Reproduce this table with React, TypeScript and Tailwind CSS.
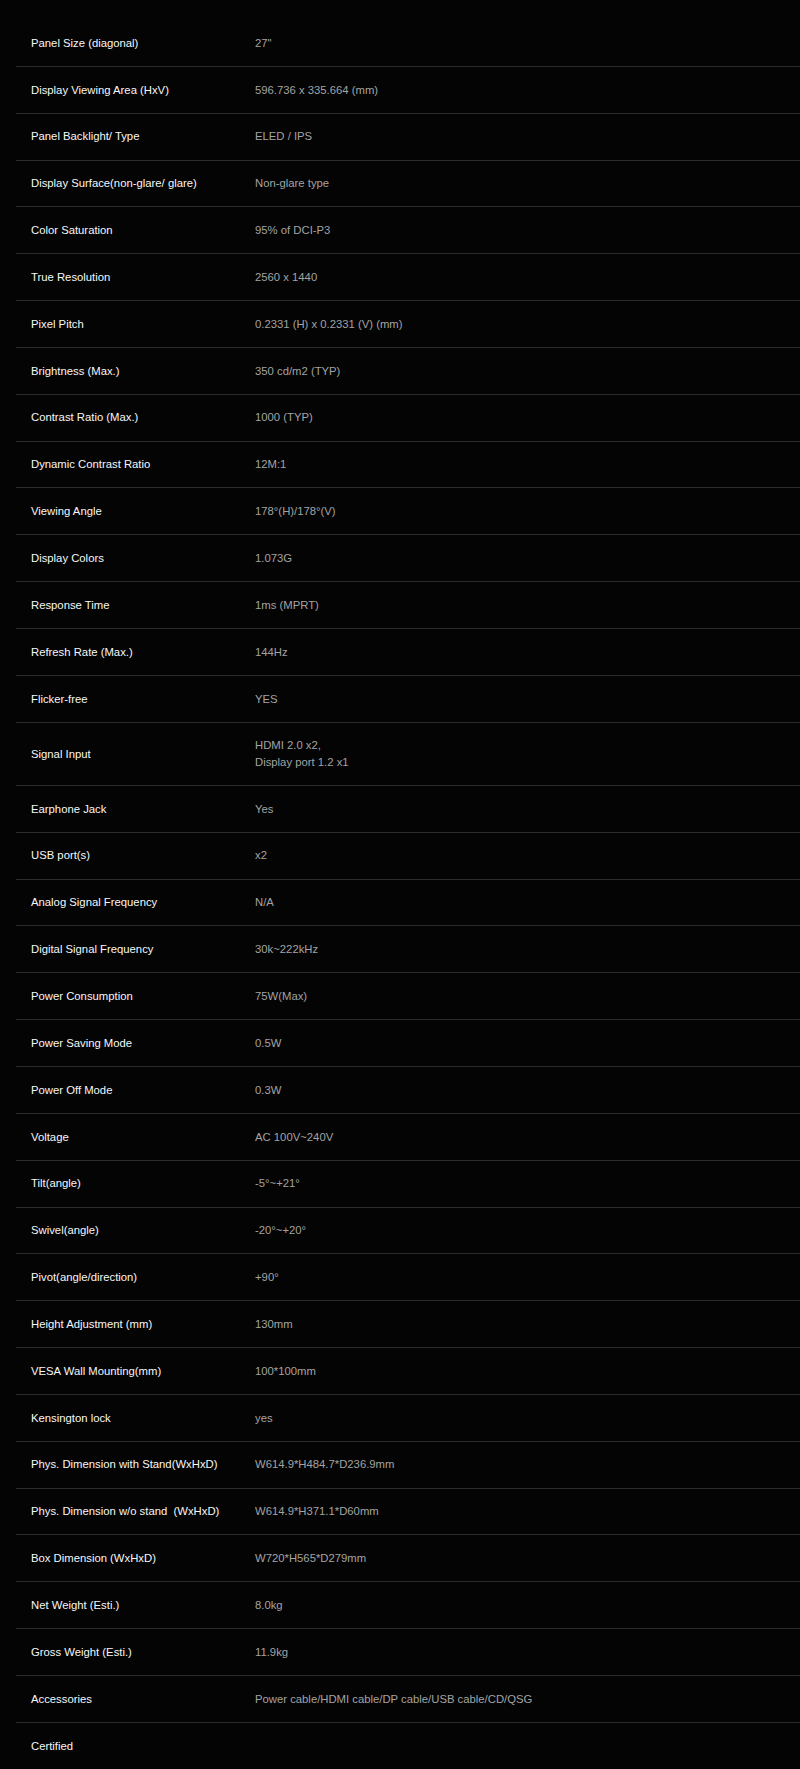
const specs: [string, string[]][] = [
  ["Panel Size (diagonal)", ["27\""]],
  ["Display Viewing Area (HxV)", ["596.736 x 335.664 (mm)"]],
  ["Panel Backlight/ Type", ["ELED / IPS"]],
  ["Display Surface(non-glare/ glare)", ["Non-glare type"]],
  ["Color Saturation", ["95% of DCI-P3"]],
  ["True Resolution", ["2560 x 1440"]],
  ["Pixel Pitch", ["0.2331 (H) x 0.2331 (V) (mm)"]],
  ["Brightness (Max.)", ["350 cd/m2 (TYP)"]],
  ["Contrast Ratio (Max.)", ["1000 (TYP)"]],
  ["Dynamic Contrast Ratio", ["12M:1"]],
  ["Viewing Angle", ["178°(H)/178°(V)"]],
  ["Display Colors", ["1.073G"]],
  ["Response Time", ["1ms (MPRT)"]],
  ["Refresh Rate (Max.)", ["144Hz"]],
  ["Flicker-free", ["YES"]],
  ["Signal Input", ["HDMI 2.0 x2,", "Display port 1.2 x1"]],
  ["Earphone Jack", ["Yes"]],
  ["USB port(s)", ["x2"]],
  ["Analog Signal Frequency", ["N/A"]],
  ["Digital Signal Frequency", ["30k~222kHz"]],
  ["Power Consumption", ["75W(Max)"]],
  ["Power Saving Mode", ["0.5W"]],
  ["Power Off Mode", ["0.3W"]],
  ["Voltage", ["AC 100V~240V"]],
  ["Tilt(angle)", ["-5°~+21°"]],
  ["Swivel(angle)", ["-20°~+20°"]],
  ["Pivot(angle/direction)", ["+90°"]],
  ["Height Adjustment (mm)", ["130mm"]],
  ["VESA Wall Mounting(mm)", ["100*100mm"]],
  ["Kensington lock", ["yes"]],
  ["Phys. Dimension with Stand(WxHxD)", ["W614.9*H484.7*D236.9mm"]],
  ["Phys. Dimension w/o stand  (WxHxD)", ["W614.9*H371.1*D60mm"]],
  ["Box Dimension (WxHxD)", ["W720*H565*D279mm"]],
  ["Net Weight (Esti.)", ["8.0kg"]],
  ["Gross Weight (Esti.)", ["11.9kg"]],
  ["Accessories", ["Power cable/HDMI cable/DP cable/USB cable/CD/QSG"]],
  ["Certified", [""]],
];

export default function App() {
  return (
    <main className="min-h-[1769px] bg-[#040404] pl-4 pt-[20px] font-['Liberation_Sans',Arial,sans-serif] text-[11.3px] leading-[16.4px]">
      {specs.map(([label, values], i) => (
        <div
          key={label}
          className={
            "flex items-center py-[14.72px] pl-[15px] " +
            (i < specs.length - 1 ? "border-b border-[#2c2c2c]" : "")
          }
        >
          <div className="w-[224px] shrink-0 whitespace-pre text-[#f7f7f7]">{label}</div>
          <div className="text-[#a3a3a3]">
            {values.map((v, j) => (
              <div key={j} className="min-h-[16.4px] whitespace-pre">
                {v}
              </div>
            ))}
          </div>
        </div>
      ))}
    </main>
  );
}
